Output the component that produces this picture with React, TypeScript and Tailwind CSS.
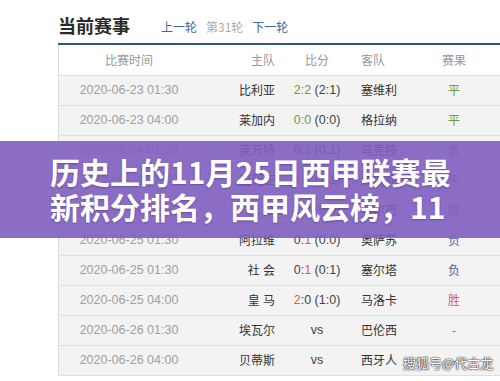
import React from "react";

type Row = {
  time: string;
  home: string;
  score: React.ReactNode;
  away: string;
  result: string;
  rc: string;
};

const G = "text-[#6a9f3c]";
const R = "text-[#e05a55]";
const B = "text-[#4a5ca6]";

const sc = (a: string, b: string, half: string, win: "h" | "a" | "d") => (
  <span>
    {win === "d" ? (
      <span className={G}>{a}:{b}</span>
    ) : win === "h" ? (
      <>
        <span className={R}>{a}</span>:{b}
      </>
    ) : (
      <>
        {a}:<span className={R}>{b}</span>
      </>
    )}{" "}
    ({half})
  </span>
);

const rows: Row[] = [
  { time: "2020-06-23 01:30", home: "比利亚", score: sc("2", "2", "2:1", "d"), away: "塞维利", result: "平", rc: G },
  { time: "2020-06-23 04:00", home: "莱加内", score: sc("0", "0", "0:0", "d"), away: "格拉纳", result: "平", rc: G },
  { time: "2020-06-24 01:30", home: "莱万特", score: sc("0", "1", "0:1", "a"), away: "马竞技", result: "负", rc: B },
  { time: "2020-06-24 01:30", home: "巴利亚", score: sc("1", "1", "1:1", "d"), away: "赫塔菲", result: "平", rc: G },
  { time: "2020-06-24 04:00", home: "巴 萨", score: sc("1", "0", "0:0", "h"), away: "毕尔巴", result: "胜", rc: R },
  { time: "2020-06-25 01:30", home: "阿拉维", score: sc("0", "1", "0:0", "a"), away: "奥萨苏", result: "负", rc: B },
  { time: "2020-06-25 01:30", home: "社 会", score: sc("0", "1", "0:1", "a"), away: "塞尔塔", result: "负", rc: B },
  { time: "2020-06-25 04:00", home: "皇 马", score: sc("2", "0", "1:0", "h"), away: "马洛卡", result: "胜", rc: R },
  { time: "2020-06-26 01:30", home: "埃瓦尔", score: "vs", away: "巴伦西", result: "-", rc: "text-[#888]" },
  { time: "2020-06-26 04:00", home: "贝蒂斯", score: "vs", away: "西牙人", result: "-", rc: "text-[#888]" },
];

const font = { fontFamily: '"Liberation Sans", "Noto Sans CJK SC", sans-serif' };
const cols = "grid grid-cols-[140px_76px_84px_60px_70px_1fr] items-center";

export default function App() {
  return (
    <div
      className="relative w-[500px] h-[381px] overflow-hidden bg-white text-[#333]"
      style={font}
    >
      <div className="pl-[58px]">
        <div className="flex items-center h-[43px] pt-[7px]">
          <div className="text-[18px] leading-[24px] font-bold text-[#2a2a2a]" style={{ fontFamily: '"Noto Sans CJK SC", sans-serif' }}>
            当前赛事
          </div>
          <div className="flex items-center gap-[9px] ml-[31px] mt-[4px] text-[12px] leading-[16px]" style={{ fontFamily: '"Noto Sans CJK SC", sans-serif' }}>
            <span className="text-[#3d6aa6]">上一轮</span>
            <span className="text-[#aaa]">第31轮</span>
            <span className="text-[#3d6aa6]">下一轮</span>
          </div>
        </div>
        <div className="h-[2px] bg-[#38557f]" />
        <div className="border-l border-[#dcdcdc]">
          <div className={`${cols} h-[31px] pt-[2px] bg-white border-b border-[#e0e0e0] text-[12px] text-[#999]`}>
            <div className="text-center">比赛时间</div>
            <div className="text-right">主队</div>
            <div className="text-center">比分</div>
            <div className="pl-[2px]">客队</div>
            <div className="text-center">赛果</div>
            <div />
          </div>
          {rows.map((r, i) => (
            <div
              key={i}
              className={`${cols} h-[30px] bg-[#f3f3f3] border-b border-[#e0e0e0] text-[12px]`}
            >
              <div className="text-center text-[#a0a0a0] text-[12.5px]">{r.time}</div>
              <div className="text-right text-[#333] whitespace-pre">{r.home}</div>
              <div className="text-center text-[#444] text-[12.5px]">{r.score}</div>
              <div className="pl-[2px] text-[#333]">{r.away}</div>
              <div className={`text-center ${r.rc}`}>{r.result}</div>
              <div />
            </div>
          ))}
        </div>
      </div>

      <div
        className="absolute left-0 top-[141px] w-[500px] h-[97px] bg-[rgba(128,94,192,0.9)] pl-[50px] pt-[13px]"
      >
        <div
          className="text-white font-bold text-[30px] leading-[35px] [text-shadow:0_1px_2px_rgba(40,20,80,0.35)]"
          style={{ fontFamily: '"Noto Sans CJK SC", sans-serif' }}
        >
          <div>历史上的11月25日西甲联赛最</div>
          <div>新积分排名，西甲风云榜，11</div>
        </div>
      </div>

      <div
        className="absolute left-[403px] top-[354px] text-[13px] leading-[18px] text-white [text-shadow:0_0_2px_#000,0_0_1px_#000]"
        style={{ fontFamily: '"Noto Sans CJK SC", sans-serif' }}
      >
        搜狐号@代古龙
      </div>
    </div>
  );
}
